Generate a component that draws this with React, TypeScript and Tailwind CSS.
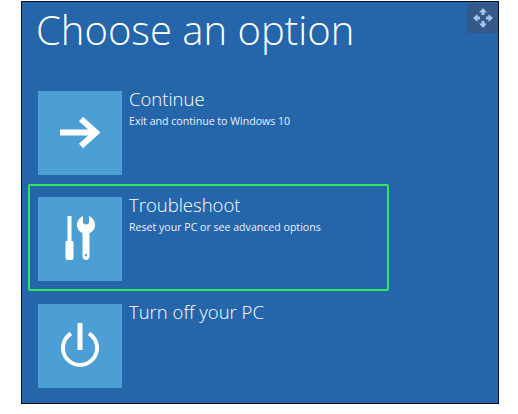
import React from 'react';

const font = { fontFamily: '"Open Sans", "Noto Sans", sans-serif' };

function ArrowIcon() {
  return (
    <svg width="40" height="32" viewBox="0 0 40 32" fill="none" stroke="#fff" strokeWidth="6">
      <path d="M0 15.500H35" />
      <path d="M21 2L36 15.500L21 29" />
    </svg>
  );
}

function ToolsIcon() {
  return (
    <svg width="31" height="44" viewBox="0 0 31 44" fill="#fff" className="mb-[3px]">
      <rect x="2.500" y="0" width="4" height="26" />
      <path d="M0.500 26a1 1 0 0 1 1-1h6a1 1 0 0 1 1 1v16a2 2 0 0 1-2 2H2.500a2 2 0 0 1-2-2z" />
      <path fillRule="evenodd" d="M18 0v6c0 1.500 1 2.500 3 2.500s3-1 3-2.500V0c3.500 1.500 6 5 6 9c0 4-2.500 7-5.500 8V40c0 2.500-1.500 4-3.500 4s-3.500-1.500-3.500-4V17c-3-1-5.500-4-5.500-8C12 5 14.500 1.500 18 0zM21 38a1.200 1.200 0 1 0 0 2.400a1.200 1.200 0 0 0 0-2.400z" />
    </svg>
  );
}

function PowerIcon() {
  return (
    <svg width="38" height="44" viewBox="0 0 38 44" fill="none" stroke="#fff" strokeWidth="4" className="mb-[3px]">
      <path d="M10 10.500a17 17 0 1 0 18 0" />
      <path d="M19 0V27" strokeWidth="5" />
    </svg>
  );
}

function MoveIcon() {
  return (
    <svg width="20" height="20" viewBox="0 0 20 20" fill="#a3c6e8">
      <path d="M10 0l4 4.500h-2.500V7h-3V4.500H6z" />
      <path d="M10 20l4-4.500h-2.500V13h-3v2.500H6z" />
      <path d="M0 10l4.500-4v2.500H7v3H4.500V14z" />
      <path d="M20 10l-4.500-4v2.500H13v3h2.500V14z" />
    </svg>
  );
}

function Option({ icon, title, sub, selected, className }: { icon: React.ReactNode; title: string; sub?: string; selected?: boolean; className: string }) {
  return (
    <div className={`flex w-[361px] pl-[8px] pt-[11px] border-2 rounded-[2px] ${className} ${selected ? 'border-[#2ee85f]' : 'border-transparent'}`}>
      <div className="w-[84px] h-[84px] bg-[#4b9fd5] flex items-center justify-center shrink-0">{icon}</div>
      <div className="ml-[7px] text-white">
        <div className="text-[18.500px] leading-[18px] font-light mt-[-1px]">{title}</div>
        {sub && <div className="text-[10.600px] leading-[14px] mt-[6px] text-[#e8f1fa]">{sub}</div>}
      </div>
    </div>
  );
}

export default function App() {
  return (
    <div className="w-[518px] h-[414px] bg-white pt-[1px] pl-[21px] overflow-hidden" style={font}>
      <div className="relative w-[478px] h-[403px] bg-[#2566ab] border border-[#0a1020]">
        <div className="absolute top-[1px] right-0 w-[31px] h-[30px] bg-[#34588a] flex items-center justify-center">
          <MoveIcon />
        </div>
        <h1 className="text-[40px] leading-[50px] font-light text-white pl-[14px] pt-[3px] h-[76px]">Choose an option</h1>
        <div className="flex flex-col pl-[6px]">
          <Option className="h-[106px]" icon={<ArrowIcon />} title="Continue" sub="Exit and continue to Windows 10" />
          <Option className="h-[107px]" icon={<ToolsIcon />} title="Troubleshoot" sub="Reset your PC or see advanced options" selected />
          <Option className="h-[107px]" icon={<PowerIcon />} title="Turn off your PC" />
        </div>
      </div>
    </div>
  );
}
